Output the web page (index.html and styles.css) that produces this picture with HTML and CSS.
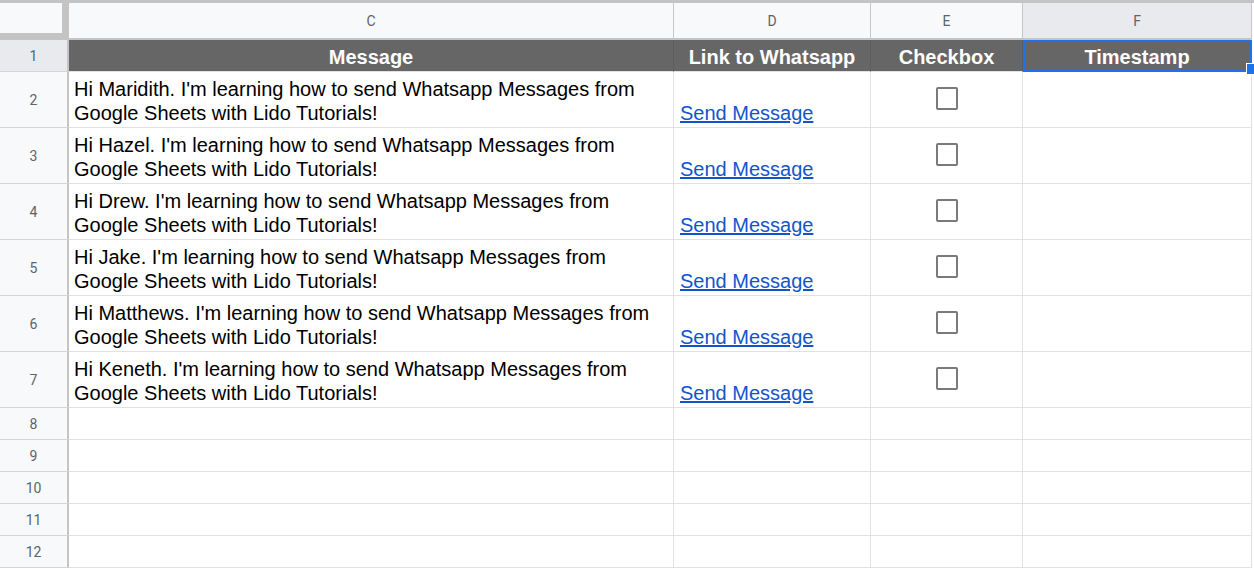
FILE: index.html
```html
<!DOCTYPE html>
<html lang="en">
<head>
  <meta charset="UTF-8">
  <title>Whatsapp Messages</title>
  <link rel="stylesheet" href="styles.css">
</head>
<body>
  <div class="sheet">
    <div class="grid">
      <div class="corner"></div>
      <div class="col-head">C</div>
      <div class="col-head">D</div>
      <div class="col-head">E</div>
      <div class="col-head active">F</div>

      <div class="row-head active">1</div>
      <div class="title">Message</div>
      <div class="title">Link to Whatsapp</div>
      <div class="title">Checkbox</div>
      <div class="title selected">Timestamp<span class="handle"></span></div>

      <div class="row-head">2</div>
      <div class="cell msg">Hi Maridith. I'm learning how to send Whatsapp Messages from Google Sheets with Lido Tutorials!</div>
      <div class="cell link"><a href="#">Send Message</a></div>
      <div class="cell check"><span class="box"></span></div>
      <div class="cell"></div>

      <div class="row-head">3</div>
      <div class="cell msg">Hi Hazel. I'm learning how to send Whatsapp Messages from Google Sheets with Lido Tutorials!</div>
      <div class="cell link"><a href="#">Send Message</a></div>
      <div class="cell check"><span class="box"></span></div>
      <div class="cell"></div>

      <div class="row-head">4</div>
      <div class="cell msg">Hi Drew. I'm learning how to send Whatsapp Messages from Google Sheets with Lido Tutorials!</div>
      <div class="cell link"><a href="#">Send Message</a></div>
      <div class="cell check"><span class="box"></span></div>
      <div class="cell"></div>

      <div class="row-head">5</div>
      <div class="cell msg">Hi Jake. I'm learning how to send Whatsapp Messages from Google Sheets with Lido Tutorials!</div>
      <div class="cell link"><a href="#">Send Message</a></div>
      <div class="cell check"><span class="box"></span></div>
      <div class="cell"></div>

      <div class="row-head">6</div>
      <div class="cell msg">Hi Matthews. I'm learning how to send Whatsapp Messages from Google Sheets with Lido Tutorials!</div>
      <div class="cell link"><a href="#">Send Message</a></div>
      <div class="cell check"><span class="box"></span></div>
      <div class="cell"></div>

      <div class="row-head">7</div>
      <div class="cell msg">Hi Keneth. I'm learning how to send Whatsapp Messages from Google Sheets with Lido Tutorials!</div>
      <div class="cell link"><a href="#">Send Message</a></div>
      <div class="cell check"><span class="box"></span></div>
      <div class="cell"></div>

      <div class="row-head">8</div>
      <div class="cell"></div><div class="cell"></div><div class="cell"></div><div class="cell"></div>
      <div class="row-head">9</div>
      <div class="cell"></div><div class="cell"></div><div class="cell"></div><div class="cell"></div>
      <div class="row-head">10</div>
      <div class="cell"></div><div class="cell"></div><div class="cell"></div><div class="cell"></div>
      <div class="row-head">11</div>
      <div class="cell"></div><div class="cell"></div><div class="cell"></div><div class="cell"></div>
      <div class="row-head">12</div>
      <div class="cell"></div><div class="cell"></div><div class="cell"></div><div class="cell"></div>
    </div>
  </div>
</body>
</html>
```

FILE: styles.css
```css
html, body {
  margin: 0;
  padding: 0;
  background: #ffffff;
  overflow: hidden;
}
.sheet {
  border-top: 3px solid #c4c4c4;
  font-family: 'Liberation Sans', Arial, sans-serif;
}
.grid {
  display: grid;
  grid-template-columns: 69px 605px 197px 152px 229px;
  grid-template-rows: 37px 32px repeat(6, 56px) repeat(5, 32px);
}
.grid > div {
  box-sizing: border-box;
}
.corner {
  background: #f8f9fa;
  border-right: 7px solid #c4c4c4;
  border-bottom: 7px solid #c4c4c4;
}
.col-head {
  background: #f8f9fa;
  border-right: 1px solid #c7c7c7;
  border-bottom: 2px solid #c4c4c4;
  color: #5f6368;
  font-family: Roboto, 'Liberation Sans', sans-serif;
  font-size: 14px;
  display: flex;
  align-items: center;
  justify-content: center;
}
.col-head.active,
.row-head.active {
  background: #e8eaed;
}
.row-head {
  background: #f8f9fa;
  border-right: 2px solid #c4c4c4;
  border-bottom: 1px solid #d6d6d6;
  color: #5f6368;
  font-family: Roboto, 'Liberation Sans', sans-serif;
  font-size: 14px;
  display: flex;
  align-items: center;
  justify-content: center;
}
.title {
  background: #666666;
  color: #ffffff;
  font-weight: bold;
  font-size: 20px;
  border-right: 1px solid #5e5e5e;
  border-bottom: 1px solid #e2e2e2;
  display: flex;
  align-items: center;
  justify-content: center;
  padding-top: 3px;
}
.title.selected {
  position: relative;
  border: 2px solid #1a73e8;
  border-right-width: 3px;
  border-bottom-width: 3px;
}
.handle {
  position: absolute;
  right: -7px;
  bottom: -6px;
  width: 8px;
  height: 10px;
  background: #1a73e8;
  border: 1px solid #ffffff;
}
.cell {
  border-right: 1px solid #e2e2e2;
  border-bottom: 1px solid #e2e2e2;
  font-size: 20px;
  line-height: 24px;
  color: #000000;
}
.msg {
  display: flex;
  align-items: flex-end;
  padding: 0 5px 2px 5px;
}
.link {
  display: flex;
  align-items: flex-end;
  padding: 0 6px 2px 6px;
}
.link a {
  color: #1155cc;
  text-decoration: underline;
}
.check {
  display: flex;
  align-items: center;
  justify-content: center;
  padding-bottom: 2px;
}
.box {
  width: 18px;
  height: 19px;
  border: 2px solid #7a7a7a;
  border-radius: 2px;
}
```
